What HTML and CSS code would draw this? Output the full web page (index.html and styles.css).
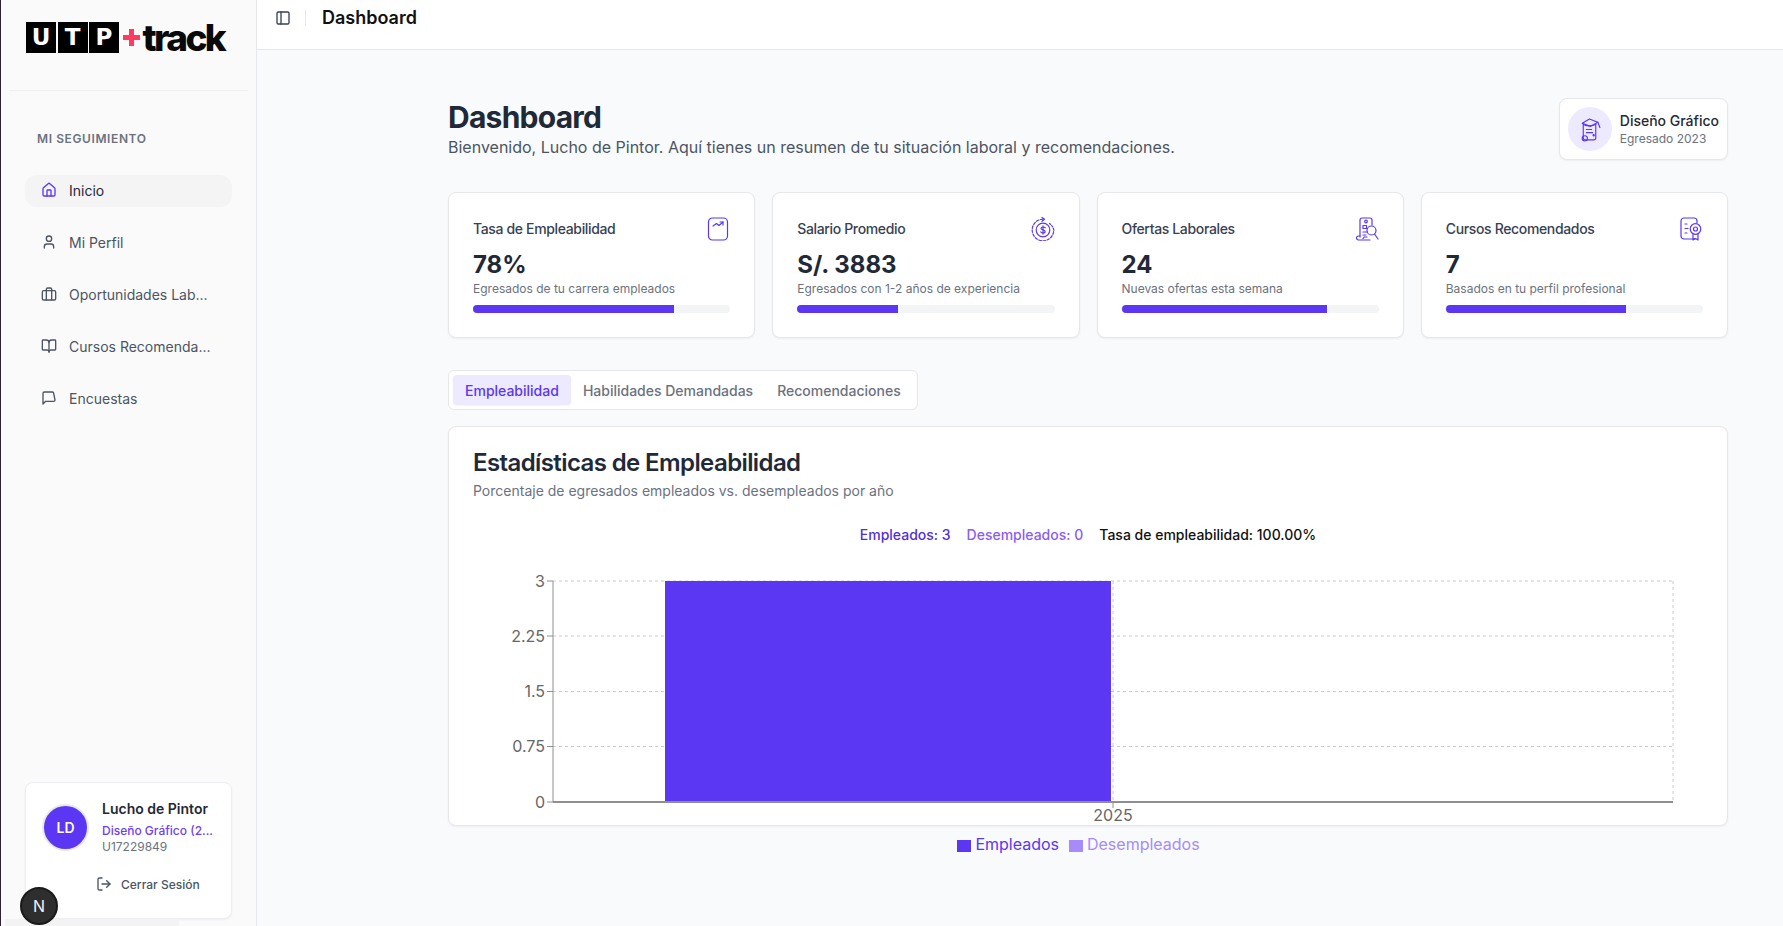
FILE: index.html
```html
<!DOCTYPE html>
<html lang="es">
<head>
    <meta charset="UTF-8">
    <meta name="viewport" content="width=device-width, initial-scale=1.0">
    <title>Dashboard</title>
    <link rel="stylesheet" href="styles.css">
</head>
<body>

<aside class="sidebar">
    <div class="sidebar-logo">
        <div class="logo">
            <span class="logo-block">U</span>
            <span class="logo-block">T</span>
            <span class="logo-block">P</span>
            <span class="logo-plus"></span>
            <span class="logo-track">track</span>
        </div>
    </div>

    <div class="sidebar-label">MI SEGUIMIENTO</div>

    <nav class="nav">
        <a class="nav-item active">
            <svg class="icon" viewBox="0 0 24 24"><path d="M15 21v-8a1 1 0 0 0-1-1h-4a1 1 0 0 0-1 1v8"/><path d="M3 10a2 2 0 0 1 .709-1.528l7-5.999a2 2 0 0 1 2.582 0l7 5.999A2 2 0 0 1 21 10v9a2 2 0 0 1-2 2H5a2 2 0 0 1-2-2z"/></svg>
            <span class="nav-text">Inicio</span>
        </a>
        <a class="nav-item">
            <svg class="icon" viewBox="0 0 24 24"><path d="M19 21v-2a4 4 0 0 0-4-4H9a4 4 0 0 0-4 4v2"/><circle cx="12" cy="7" r="4"/></svg>
            <span class="nav-text">Mi Perfil</span>
        </a>
        <a class="nav-item">
            <svg class="icon" viewBox="0 0 24 24"><rect x="2" y="7" width="20" height="14" rx="2"/><path d="M16 21V5a2 2 0 0 0-2-2h-4a2 2 0 0 0-2 2v16"/></svg>
            <span class="nav-text">Oportunidades Lab...</span>
        </a>
        <a class="nav-item">
            <svg class="icon" viewBox="0 0 24 24"><path d="M12 7v14"/><path d="M3 18a1 1 0 0 1-1-1V4a1 1 0 0 1 1-1h5a4 4 0 0 1 4 4 4 4 0 0 1 4-4h5a1 1 0 0 1 1 1v13a1 1 0 0 1-1 1h-6a3 3 0 0 0-3 3 3 3 0 0 0-3-3z"/></svg>
            <span class="nav-text">Cursos Recomenda...</span>
        </a>
        <a class="nav-item">
            <svg class="icon" viewBox="0 0 24 24"><path d="M21 15a2 2 0 0 1-2 2H7l-4 4V5a2 2 0 0 1 2-2h12a2 2 0 0 1 2 2z"/></svg>
            <span class="nav-text">Encuestas</span>
        </a>
    </nav>

    <div class="user-card">
        <div class="user-row">
            <div class="avatar">LD</div>
            <div class="user-info">
                <div class="user-name">Lucho de Pintor</div>
                <div class="user-career">Diseño Gráfico (2...</div>
                <div class="user-code">U17229849</div>
            </div>
        </div>
        <a class="logout">
            <svg class="icon" viewBox="0 0 24 24"><path d="M9 21H5a2 2 0 0 1-2-2V5a2 2 0 0 1 2-2h4"/><polyline points="16 17 21 12 16 7"/><line x1="21" y1="12" x2="9" y2="12"/></svg>
            Cerrar Sesión
        </a>
    </div>
    <div class="sidebar-strip"></div>

    <div class="next-badge">N</div>
</aside>

<div class="page">
    <header class="topbar">
        <svg class="icon topbar-icon" viewBox="0 0 24 24"><rect x="3" y="3" width="18" height="18" rx="2"/><path d="M9 3v18"/></svg>
        <span class="topbar-sep"></span>
        <span class="topbar-title">Dashboard</span>
    </header>

    <main class="content">
        <div class="page-head">
            <div>
                <h1 class="page-title">Dashboard</h1>
                <p class="page-sub">Bienvenido, Lucho de Pintor. Aquí tienes un resumen de tu situación laboral y recomendaciones.</p>
            </div>
            <div class="career-badge">
                <div class="career-icon">
                    <svg class="career-svg" viewBox="0 0 24 24"><path d="M6 7v13a2 2 0 0 0 2 2h8a2 2 0 0 0 2-2V7"/><path d="M5 6l7-4 8 3-7 4z"/><path d="M20 5l2 5"/><path d="M6 7c2 2 9 2 12 0"/><path d="M9 12h5M9 15h6"/><circle cx="7.500" cy="20.500" r="2.500"/><circle cx="16" cy="17.500" r=".6"/></svg>
                </div>
                <div>
                    <div class="career-name">Diseño Gráfico</div>
                    <div class="career-year">Egresado 2023</div>
                </div>
            </div>
        </div>

        <section class="stats">
            <div class="stat-card">
                <div class="stat-head">
                    <span class="stat-title">Tasa de Empleabilidad</span>
                    <svg class="stat-icon" viewBox="0 0 24 24"><rect x="2.500" y="1" width="19" height="22" rx="4"/><path d="M7 9l3.500-2.500 2.500 2 4-3.500"/><path d="M14 5h3v3"/></svg>
                </div>
                <div class="stat-value">78%</div>
                <div class="stat-sub">Egresados de tu carrera empleados</div>
                <div class="progress"><div class="progress-fill" style="width: 78%"></div></div>
            </div>
            <div class="stat-card">
                <div class="stat-head">
                    <span class="stat-title">Salario Promedio</span>
                    <svg class="stat-icon" viewBox="0 0 24 24"><circle cx="12" cy="13" r="6.800"/><path d="M12 2.200a10.800 10.800 0 1 0 10.800 10.800" stroke-dasharray="2.600 1.600"/><path d="M18.500 6.500a10.800 10.800 0 0 1 4.300 6.500" stroke-dasharray="1.500 1.500"/><path d="M11 .5l2.500 1.800L11 4.300"/><path d="M14.200 10.800c-.5-1-3.900-1.300-4.200.5-.3 2 4.300 1.200 4.200 3.300-.1 1.800-3.800 1.500-4.400.3M12 8.800v8.400"/></svg>
                </div>
                <div class="stat-value">S/. 3883</div>
                <div class="stat-sub">Egresados con 1-2 años de experiencia</div>
                <div class="progress"><div class="progress-fill" style="width: 39%"></div></div>
            </div>
            <div class="stat-card">
                <div class="stat-head">
                    <span class="stat-title">Ofertas Laborales</span>
                    <svg class="stat-icon" viewBox="0 0 24 24"><path d="M5 20V3a2 2 0 0 1 2-2h8a2 2 0 0 1 2 2v5"/><path d="M15 23H3.500a2 2 0 0 1-2-2 2 2 0 0 1 2-2H5"/><path d="M8 21.500a2 2 0 0 0 1-1.500h3"/><circle cx="11" cy="4.500" r="1.300"/><rect x="8" y="8.500" width="3.500" height="3"/><path d="M8 15h4M8 18h3"/><circle cx="16.500" cy="13.500" r="4.500"/><path d="M19.500 17l3.500 5"/></svg>
                </div>
                <div class="stat-value">24</div>
                <div class="stat-sub">Nuevas ofertas esta semana</div>
                <div class="progress"><div class="progress-fill" style="width: 80%"></div></div>
            </div>
            <div class="stat-card">
                <div class="stat-head">
                    <span class="stat-title">Cursos Recomendados</span>
                    <svg class="stat-icon" viewBox="0 0 24 24"><path d="M16 21.500v.5H5a3 3 0 0 1-3-3V4a3 3 0 0 1 3-3h10a3 3 0 0 1 3 3v2"/><path d="M6 7h2M6 11.500h3M6 16h2"/><circle cx="16.500" cy="12" r="5.300"/><circle cx="16.500" cy="12" r="2"/><path d="M14 17v6l2.500-1.500L19 23v-6"/></svg>
                </div>
                <div class="stat-value">7</div>
                <div class="stat-sub">Basados en tu perfil profesional</div>
                <div class="progress"><div class="progress-fill" style="width: 70%"></div></div>
            </div>
        </section>

        <div class="tabs">
            <button class="tab active">Empleabilidad</button>
            <button class="tab">Habilidades Demandadas</button>
            <button class="tab">Recomendaciones</button>
        </div>

        <section class="chart-card">
            <h2 class="chart-title">Estadísticas de Empleabilidad</h2>
            <p class="chart-sub">Porcentaje de egresados empleados vs. desempleados por año</p>
            <div class="chart-totals">
                <span class="total-emp">Empleados: 3</span>
                <span class="total-des">Desempleados: 0</span>
                <span class="total-rate">Tasa de empleabilidad: 100.00%</span>
            </div>
            <svg class="chart" viewBox="0 0 1279 252">
                <g class="grid">
                    <line x1="105" y1="11" x2="1225" y2="11"/>
                    <line x1="105" y1="66" x2="1225" y2="66"/>
                    <line x1="105" y1="121.500" x2="1225" y2="121.500"/>
                    <line x1="105" y1="176.500" x2="1225" y2="176.500"/>
                    <line x1="665" y1="11" x2="665" y2="232"/>
                    <line x1="1225" y1="11" x2="1225" y2="232"/>
                </g>
                <rect class="bar" x="217" y="11" width="446" height="221"/>
                <g class="axis">
                    <line x1="105" y1="11" x2="105" y2="232"/>
                    <line class="axis-base" x1="105" y1="232" x2="1225" y2="232"/>
                    <line x1="99" y1="11" x2="105" y2="11"/>
                    <line x1="99" y1="66" x2="105" y2="66"/>
                    <line x1="99" y1="121.500" x2="105" y2="121.500"/>
                    <line x1="99" y1="176.500" x2="105" y2="176.500"/>
                    <line x1="99" y1="232" x2="105" y2="232"/>
                    <line x1="665" y1="232" x2="665" y2="238"/>
                </g>
                <g class="tick-y">
                    <text x="97" y="17">3</text>
                    <text x="97" y="72">2.25</text>
                    <text x="97" y="127">1.5</text>
                    <text x="97" y="182">0.75</text>
                    <text x="97" y="238">0</text>
                </g>
                <text class="tick-x" x="665" y="251">2025</text>
            </svg>
        </section>

        <div class="legend">
            <span class="legend-item legend-emp"><i class="swatch"></i>Empleados</span>
            <span class="legend-item legend-des"><i class="swatch"></i>Desempleados</span>
        </div>
    </main>
</div>

</body>
</html>
```

FILE: styles.css
```css
* {
    box-sizing: border-box;
}

body {
    font-family: 'Inter', 'Liberation Sans', sans-serif;
    margin: 0;
    height: 926px;
    display: flex;
    overflow: hidden;
    background-color: #f9fafb;
    color: #1f2937;
}

.icon {
    width: 16px;
    height: 16px;
    flex-shrink: 0;
    fill: none;
    stroke: currentColor;
    stroke-width: 2;
    stroke-linecap: round;
    stroke-linejoin: round;
}

/* sidebar */
.sidebar {
    position: relative;
    width: 257px;
    flex-shrink: 0;
    display: flex;
    flex-direction: column;
    background-color: #fafafa;
    border-left: 1px solid #2a2433;
    border-right: 1px solid #e5e7eb;
}

.sidebar-logo {
    height: 91px;
    margin: 0 8px;
    padding: 22px 0 0 17px;
    border-bottom: 1px solid #f0f0f1;
}

.logo {
    display: flex;
    align-items: flex-start;
    height: 31px;
}

.logo-block {
    width: 30px;
    height: 31px;
    margin-right: 1.500px;
    background-color: #000;
    color: #fff;
    font-family: 'DejaVu Sans', sans-serif;
    font-size: 23px;
    font-weight: 700;
    line-height: 31px;
    text-align: center;
}

.logo-plus {
    width: 17px;
    height: 17px;
    margin: 7px 3px 0 2px;
    background:
        linear-gradient(#ff3b63, #ff3b63) center / 100% 5px no-repeat,
        linear-gradient(#ff3b63, #ff3b63) center / 5px 100% no-repeat;
}

.logo-track {
    font-family: 'Inter', sans-serif;
    font-size: 37px;
    font-weight: 800;
    letter-spacing: -2.600px;
    line-height: 31px;
    color: #0a0a0a;
}

.sidebar-label {
    margin: 40px 0 0 36px;
    font-size: 12px;
    font-weight: 600;
    line-height: 16px;
    letter-spacing: 0.600px;
    color: #6b7280;
}

.nav {
    display: flex;
    flex-direction: column;
    gap: 20px;
    margin: 28px 24px 0;
}

.nav-item {
    display: flex;
    align-items: center;
    gap: 12px;
    height: 32px;
    padding: 0 16px 2px;
    border-radius: 12px;
    font-size: 14px;
    color: #4b5563;
}

.nav-item.active {
    background-color: #f4f4f5;
    color: #1f2937;
}

.nav-item.active .icon {
    color: #5b36f3;
}

.nav-text {
    white-space: nowrap;
}

.user-card {
    margin: auto 24px 0;
    height: 137px;
    padding: 20px 16px 0 16px;
    background-color: #fff;
    border: 1px solid #eceef1;
    border-radius: 8px;
    box-shadow: 0 1px 2px rgba(0, 0, 0, 0.05);
}

.sidebar-strip {
    width: 174px;
    height: 7px;
    margin-left: 4px;
    background-color: #f3f3f4;
}

.user-row {
    display: flex;
    gap: 13px;
}

.avatar {
    width: 47px;
    height: 47px;
    margin-top: 1px;
    flex-shrink: 0;
    display: flex;
    align-items: center;
    justify-content: center;
    background-color: #5b36f3;
    border: 2px solid #e8e8ee;
    border-radius: 50%;
    color: #fff;
    font-size: 14px;
    font-weight: 600;
}

.user-info {
    min-width: 0;
    margin-top: -4px;
    white-space: nowrap;
}

.user-name {
    font-size: 14px;
    font-weight: 600;
    line-height: 20px;
}

.user-career {
    margin-top: 4px;
    font-size: 12px;
    font-weight: 500;
    line-height: 16px;
    color: #6d3ff0;
}

.user-code {
    font-size: 12px;
    line-height: 16px;
    color: #6b7280;
}

.logout {
    display: flex;
    align-items: center;
    gap: 9px;
    margin: 21px 0 0 54px;
    font-size: 12px;
    font-weight: 500;
    color: #4b5563;
}

.next-badge {
    position: absolute;
    left: 19px;
    top: 887px;
    width: 38px;
    height: 38px;
    display: flex;
    align-items: center;
    justify-content: center;
    background-color: #2e2e2e;
    border: 2px solid #1a1a1a;
    border-radius: 50%;
    color: #f2f2f2;
    font-size: 16px;
    font-weight: 400;
}

/* right side */
.page {
    flex: 1;
    min-width: 0;
}

.topbar {
    display: flex;
    align-items: center;
    height: 50px;
    padding: 0 0 14px 18px;
    background-color: #fff;
    border-bottom: 1px solid #e5e7eb;
}

.topbar-icon {
    color: #374151;
}

.topbar-sep {
    width: 1px;
    height: 16px;
    margin: 0 16px 0 14px;
    background-color: #e5e7eb;
}

.topbar-title {
    font-size: 18px;
    font-weight: 600;
    color: #111;
}

.content {
    padding: 48px 55px 0 191px;
}

.page-head {
    display: flex;
    justify-content: space-between;
    align-items: flex-start;
    margin-bottom: 32px;
}

.page-title {
    margin: 1px 0 0;
    font-size: 30px;
    font-weight: 700;
    line-height: 36px;
    letter-spacing: -0.750px;
    color: #1f2937;
}

.page-sub {
    margin: 0;
    font-size: 16px;
    line-height: 24px;
    color: #4b5563;
}

.career-badge {
    display: flex;
    align-items: center;
    gap: 8px;
    height: 62px;
    padding: 0 8px;
    background-color: #fff;
    border: 1px solid #e5e7eb;
    border-radius: 8px;
    box-shadow: 0 1px 2px rgba(0, 0, 0, 0.05);
}

.career-icon {
    width: 44px;
    height: 44px;
    display: flex;
    align-items: center;
    justify-content: center;
    background-color: #ede9fe;
    border-radius: 50%;
}

.career-svg {
    width: 25px;
    height: 25px;
    fill: none;
    stroke: #5b36f3;
    stroke-width: 1.100;
    stroke-linecap: round;
    stroke-linejoin: round;
}

.career-name {
    font-size: 14px;
    font-weight: 500;
    line-height: 20px;
}

.career-year {
    font-size: 12px;
    line-height: 16px;
    color: #6b7280;
}

.stats {
    display: grid;
    grid-template-columns: repeat(4, 1fr);
    gap: 17px;
    margin-bottom: 32px;
}

.stat-card {
    height: 146px;
    padding: 24px;
    background-color: #fff;
    border: 1px solid #e5e7eb;
    border-radius: 8px;
    box-shadow: 0 1px 2px rgba(0, 0, 0, 0.05);
}

.stat-head {
    display: flex;
    justify-content: space-between;
    align-items: center;
    height: 24px;
}

.stat-title {
    margin-top: -2px;
    font-size: 14px;
    font-weight: 500;
    letter-spacing: -0.350px;
    color: #374151;
}

.stat-icon {
    width: 24px;
    height: 24px;
    fill: none;
    stroke: #5b36f3;
    stroke-width: 1.200;
    stroke-linecap: round;
    stroke-linejoin: round;
}

.stat-value {
    margin-top: 8px;
    font-size: 24px;
    font-weight: 700;
    line-height: 32px;
    color: #1f2937;
}

.stat-sub {
    font-size: 12px;
    line-height: 16px;
    color: #6b7280;
}

.progress {
    height: 8px;
    margin-top: 8px;
    background-color: #f3f4f6;
    border-radius: 4px;
    overflow: hidden;
}

.progress-fill {
    height: 100%;
    background-color: #5b36f3;
}

.tabs {
    display: inline-flex;
    width: 470px;
    height: 40px;
    padding: 4px;
    margin-bottom: 16px;
    background-color: #fff;
    border: 1px solid #e5e7eb;
    border-radius: 6px;
    vertical-align: top;
}

.tab {
    padding: 0 12px;
    background: none;
    border: none;
    border-radius: 4px;
    font-family: inherit;
    font-size: 14px;
    font-weight: 500;
    color: #6b7280;
}

.tab.active {
    background-color: #ede9fe;
    color: #5b36f3;
    box-shadow: 0 1px 2px rgba(0, 0, 0, 0.05);
}

.chart-card {
    height: 400px;
    padding: 24px 0 0;
    background-color: #fff;
    border: 1px solid #e5e7eb;
    border-radius: 8px;
    box-shadow: 0 1px 2px rgba(0, 0, 0, 0.05);
}

.chart-title {
    margin: 0 0 0 24px;
    font-size: 24px;
    font-weight: 600;
    line-height: 24px;
    letter-spacing: -0.600px;
    color: #1f2937;
}

.chart-sub {
    margin: 6px 0 0 24px;
    font-size: 14px;
    line-height: 20px;
    color: #6b7280;
}

.chart-totals {
    display: flex;
    justify-content: center;
    gap: 16px;
    margin-top: 24px;
    font-size: 14px;
    font-weight: 500;
    line-height: 20px;
}

.total-emp {
    color: #4f2fd8;
}

.total-des {
    color: #8b5cf6;
}

.total-rate {
    color: #111;
}

.chart {
    display: block;
    width: 1279px;
    height: 252px;
    margin: 25px 0 0 -1px;
    overflow: visible;
}

.grid line {
    stroke: #ccc;
    stroke-dasharray: 3 3;
}

.axis line {
    stroke: #8f8f8f;
    stroke-width: 1;
}

.axis .axis-base {
    stroke-width: 2;
}

.bar {
    fill: #5b36f3;
}

.tick-y text {
    text-anchor: end;
    font-size: 16px;
    fill: #666;
}

.tick-x {
    text-anchor: middle;
    font-size: 16px;
    fill: #666;
}

.legend {
    display: flex;
    justify-content: center;
    gap: 10px;
    margin-top: 6px;
    padding-right: 19px;
    font-size: 16px;
    line-height: 24px;
}

.legend-item {
    display: flex;
    align-items: center;
    gap: 4px;
}

.swatch {
    width: 14px;
    height: 12px;
    margin-top: 3px;
}

.legend-emp {
    color: #5b36f3;
}

.legend-emp .swatch {
    background-color: #5b36f3;
}

.legend-des {
    color: #a78bfa;
}

.legend-des .swatch {
    background-color: #a78bfa;
}
```
